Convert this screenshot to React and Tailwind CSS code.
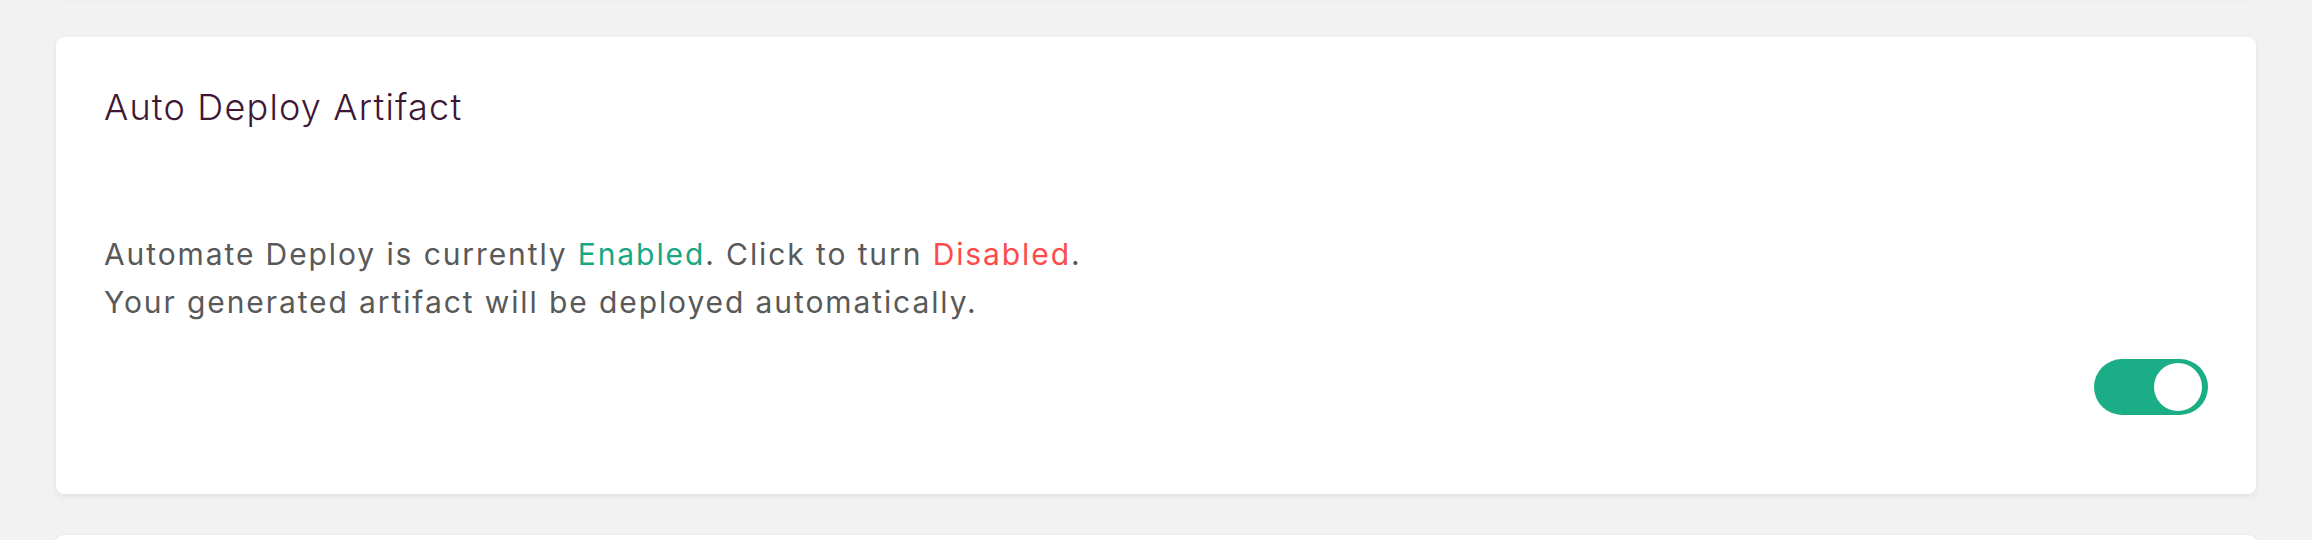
export default function App() {
  return (
    <div className="h-[540px] w-full bg-[#f2f2f2] px-[56px] overflow-hidden" style={{ fontFamily: 'Inter, "Noto Sans", sans-serif' }}>
      <div className="flex flex-col gap-[41px]">
        <div className="mt-[-104px] h-[100px] rounded-[8px] bg-white shadow-[0_2px_6px_rgba(0,0,0,0.08)]" />
        <div className="rounded-[8px] bg-white shadow-[0_2px_6px_rgba(0,0,0,0.08)] px-[48px] pt-[50px] pb-[79px]">
          <h2 className="text-[36px] leading-[40px] font-light tracking-[1.2px] text-[#3d1733]">Auto Deploy Artifact</h2>
          <div className="mt-[103px] text-[30px] leading-[48px] tracking-[1.9px] text-[#595959]">
            <p>
              Automate Deploy is currently <span className="text-[#17a883]">Enabled</span>. Click to turn{' '}
              <span className="text-[#ff4a4a]">Disabled</span>.
            </p>
            <p>Your generated artifact will be deployed automatically.</p>
          </div>
          <div className="mt-[33px] flex justify-end">
            <button className="flex h-[56px] w-[114px] items-center justify-end rounded-full bg-[#1aad86] pr-[6px]">
              <span className="block h-[48px] w-[48px] rounded-full bg-white" />
            </button>
          </div>
        </div>
        <div className="h-[100px] rounded-[8px] bg-white shadow-[0_2px_6px_rgba(0,0,0,0.08)]" />
      </div>
    </div>
  );
}
